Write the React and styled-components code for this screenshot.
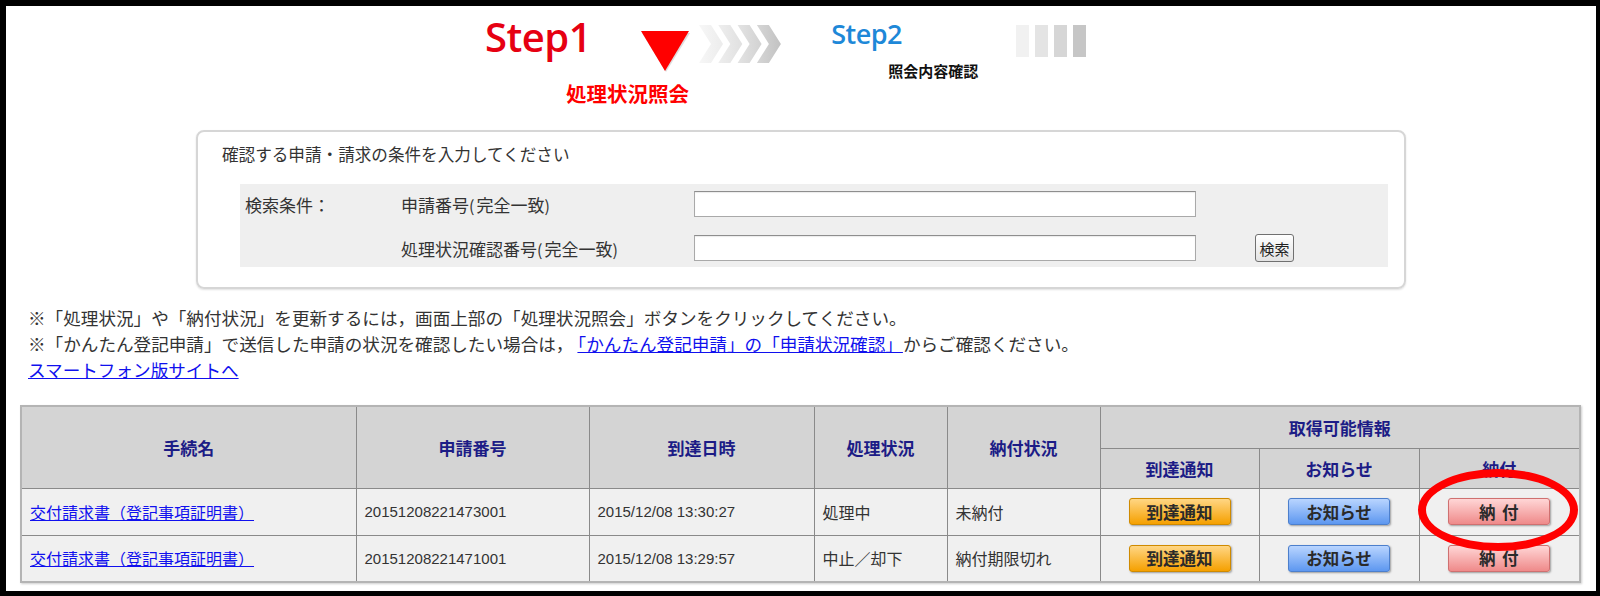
import React from "react";
import styled, { createGlobalStyle } from "styled-components";

//////////////// Global ////////////////
const GlobalStyle = createGlobalStyle`
  html, body {
    margin: 0;
    padding: 0;
    background: #fff;
  }
  body {
    font-family: "Liberation Sans", "Noto Sans CJK JP", sans-serif;
    color: #333;
  }
`;

const JP = `"Liberation Sans", "Noto Sans CJK JP", sans-serif`;

//////////////// Frame ////////////////
const Frame = styled.div`
  position: relative;
  box-sizing: border-box;
  width: 1600px;
  height: 596px;
  border-style: solid;
  border-color: #000;
  border-width: 6px 4px 5px 6px;
  background: #fff;
  overflow: hidden;
`;

//////////////// Step header ////////////////
const StepBar = styled.div`
  display: flex;
  align-items: flex-start;
  height: 124px;
  padding-left: 479px;
  box-sizing: border-box;
`;

const StepColumn = styled.div`
  display: flex;
  flex-direction: column;
  align-items: flex-start;
  margin-left: ${(p) => p.$left || 0}px;
`;

const StepRow = styled.div`
  display: flex;
  align-items: flex-start;
`;

const StepTitle = styled.div`
  font-family: "Open Sans", "Noto Sans", sans-serif;
  font-weight: 600;
  font-size: ${(p) => p.$size}px;
  line-height: ${(p) => p.$size}px;
  margin-top: ${(p) => p.$top}px;
  color: ${(p) => p.$color};
  letter-spacing: -0.5px;
`;

const StepLabel = styled.div`
  font-family: ${JP};
  font-weight: bold;
  font-size: ${(p) => p.$size}px;
  line-height: 1.2;
  color: ${(p) => p.$color};
  margin-left: ${(p) => p.$indent}px;
  margin-top: ${(p) => p.$top}px;
  white-space: nowrap;
`;

const StepGraphic = styled.svg`
  display: block;
  flex: none;
  margin-top: ${(p) => p.$top}px;
  margin-left: ${(p) => p.$left}px;
`;

function Triangle() {
  return (
    <StepGraphic width="50" height="42" $top={25} $left={50} viewBox="0 0 50 42">
      <polygon points="1,2 49,2 25,41" fill="#bbb" opacity="0.5" />
      <polygon points="0,0 48,0 24,40" fill="#ff0000" />
    </StepGraphic>
  );
}

function Chevrons() {
  const shades = [
    ["#f7f7f7", "#ececec"],
    ["#eeeeee", "#e0e0e0"],
    ["#e3e3e3", "#d2d2d2"],
    ["#d6d6d6", "#c2c2c2"],
  ];
  return (
    <StepGraphic width="82" height="38" $top={19} $left={8} viewBox="0 0 82 38">
      <defs>
        {shades.map(([a, b], i) => (
          <linearGradient key={i} id={`chev${i}`} x1="0" x2="1" y1="0" y2="0">
            <stop offset="0" stopColor={a} />
            <stop offset="1" stopColor={b} />
          </linearGradient>
        ))}
      </defs>
      {shades.map((_, i) => {
        const x = i * 19.3;
        return (
          <polygon
            key={i}
            points={`${x},0 ${x + 12},0 ${x + 24},19 ${x + 12},38 ${x},38 ${x + 12},19`}
            fill={`url(#chev${i})`}
          />
        );
      })}
    </StepGraphic>
  );
}

function Bars() {
  const shades = ["#f1f1f1", "#e4e4e4", "#d6d6d6", "#c6c6c6"];
  return (
    <StepGraphic width="72" height="32" $top={19} $left={38} viewBox="0 0 72 32">
      {shades.map((c, i) => (
        <rect key={i} x={i * 19} y="0" width="13" height="32" fill={c} />
      ))}
    </StepGraphic>
  );
}

//////////////// Search box ////////////////
const SearchBox = styled.section`
  box-sizing: border-box;
  width: 1210px;
  margin-left: 190px;
  border: 2px solid #d6d6d6;
  border-radius: 8px;
  box-shadow: 0 1px 2px rgba(0, 0, 0, 0.12);
  padding: 14px 16px 20px 24px;
`;

const SearchTitle = styled.div`
  font-family: ${JP};
  font-size: 16.6px;
  line-height: 20px;
  color: #333;
`;

const SearchGrid = styled.div`
  margin: 18px 0 0 18px;
  background: #efefef;
  padding: 7px 0 6px 5px;
  display: grid;
  grid-template-columns: 156px 293px 502px 1fr;
  grid-auto-rows: 26px;
  row-gap: 18px;
  align-items: center;
`;

const FieldLabel = styled.div`
  font-family: ${JP};
  font-size: 17px;
  color: #333;
  grid-column: ${(p) => p.$col};
  white-space: nowrap;
`;

const Paren = styled.span`
  font-family: "Noto Sans CJK JP", sans-serif;
  font-size: 16px;
  letter-spacing: 2px;
`;

const TextInput = styled.input`
  box-sizing: border-box;
  width: 502px;
  height: 26px;
  border: 1px solid #a9a9a9;
  border-top-color: #8e8e8e;
  background: #fff;
  box-shadow: inset 0 1px 1px rgba(0, 0, 0, 0.08);
  grid-column: 3;
  margin: 0;
`;

const SearchButton = styled.button`
  grid-column: 4;
  justify-self: start;
  margin-left: 59px;
  width: 39px;
  height: 28px;
  padding: 0;
  font-family: ${JP};
  font-size: 15px;
  color: #222;
  background: linear-gradient(#ffffff, #e3e3e3);
  border: 1px solid #707070;
  border-radius: 3px;
`;

//////////////// Notes ////////////////
const Notes = styled.div`
  margin-top: 17px;
  padding-left: 22px;
  font-family: ${JP};
  font-size: 17.6px;
  line-height: 26px;
  color: #333;
`;

const Link = styled.a`
  color: #1010ee;
  text-decoration: underline;
  cursor: pointer;
  margin-left: ${(p) => p.$gap || 0}px;
`;

//////////////// Table ////////////////
const Table = styled.table`
  margin: 21px 0 0 14px;
  width: 1559px;
  border-collapse: collapse;
  table-layout: fixed;
  border: 2px solid #b4b4b4;
  box-shadow: 1px 1px 2px rgba(0, 0, 0, 0.2);
`;

const HeadCell = styled.th`
  background: #d4d4d4;
  border: 1px solid #8a8a8a;
  font-family: ${JP};
  font-weight: bold;
  font-size: 17px;
  color: #1c1c86;
  text-align: center;
  padding: 0;
`;

const HeadRow = styled.tr`
  height: ${(p) => p.$h}px;
`;

const BodyRow = styled.tr`
  height: 47px;
  background: #f0f0f0;
`;

const Cell = styled.td`
  border: 1px solid #8a8a8a;
  padding: 0 0 0 8px;
  font-family: ${JP};
  font-size: ${(p) => (p.$num ? 15 : 16)}px;
  color: #333;
  text-align: ${(p) => (p.$center ? "center" : "left")};
  white-space: nowrap;
`;

const ActionButton = styled.button`
  width: 102px;
  height: 27px;
  padding: 0;
  margin-left: -8px;
  font-family: ${JP};
  font-weight: bold;
  font-size: 16.5px;
  color: #2a2a2a;
  border-radius: 3px;
  border: 1px solid ${(p) => p.$border};
  background: linear-gradient(${(p) => p.$light}, ${(p) => p.$dark});
  box-shadow: 1px 1px 2px rgba(0, 0, 0, 0.35);
  letter-spacing: ${(p) => p.$spacing || 0}px;
`;

const Highlight = styled.div`
  position: absolute;
  left: 1412px;
  top: 463px;
  width: 160px;
  height: 82px;
  box-sizing: border-box;
  border: 8px solid #ff0000;
  border-radius: 50%;
  pointer-events: none;
`;

const BUTTONS = {
  notice: { $light: "#ffd684", $dark: "#f5a000", $border: "#cf8a00" },
  info: { $light: "#b9d5ff", $dark: "#5d97f0", $border: "#4c7fcc" },
  pay: { $light: "#ffd6d6", $dark: "#ef8a8a", $border: "#cf7070" },
};

const rows = [
  {
    id: "20151208221473001",
    date: "2015/12/08 13:30:27",
    status: "処理中",
    payment: "未納付",
  },
  {
    id: "20151208221471001",
    date: "2015/12/08 13:29:57",
    status: "中止／却下",
    payment: "納付期限切れ",
  },
];

const colWidths = [335, 233, 225, 133, 153, 159, 160, 161];

export default function App() {
  return (
    <>
      <GlobalStyle />
      <Frame>
        <StepBar>
          <StepColumn>
            <StepRow>
              <StepTitle $size={40} $top={11} $color="#e60012">
                Step1
              </StepTitle>
              <Triangle />
              <Chevrons />
            </StepRow>
            <StepLabel $size={20.5} $color="#ff0000" $indent={81} $top={10}>
              処理状況照会
            </StepLabel>
          </StepColumn>
          <StepColumn $left={50}>
            <StepTitle $size={27} $top={14} $color="#1e88d8">
              Step2
            </StepTitle>
            <StepLabel $size={15} $color="#111" $indent={57} $top={16}>
              照会内容確認
            </StepLabel>
          </StepColumn>
          <Bars />
        </StepBar>

        <SearchBox>
          <SearchTitle>確認する申請・請求の条件を入力してください</SearchTitle>
          <SearchGrid>
            <FieldLabel $col={1}>検索条件：</FieldLabel>
            <FieldLabel $col={2}>
              申請番号<Paren>(</Paren>完全一致<Paren>)</Paren>
            </FieldLabel>
            <TextInput type="text" />
            <FieldLabel $col={2}>
              処理状況確認番号<Paren>(</Paren>完全一致<Paren>)</Paren>
            </FieldLabel>
            <TextInput type="text" />
            <SearchButton>検索</SearchButton>
          </SearchGrid>
        </SearchBox>

        <Notes>
          <div>
            ※「処理状況」や「納付状況」を更新するには，画面上部の「処理状況照会」ボタンをクリックしてください。
          </div>
          <div>
            ※「かんたん登記申請」で送信した申請の状況を確認したい場合は，
            <Link $gap={4}>「かんたん登記申請」の「申請状況確認」</Link>
            からご確認ください。
          </div>
          <div>
            <Link>スマートフォン版サイトへ</Link>
          </div>
        </Notes>

        <Table>
          <colgroup>
            {colWidths.map((w, i) => (
              <col key={i} style={{ width: w }} />
            ))}
          </colgroup>
          <thead>
            <HeadRow $h={42}>
              <HeadCell rowSpan={2}>手続名</HeadCell>
              <HeadCell rowSpan={2}>申請番号</HeadCell>
              <HeadCell rowSpan={2}>到達日時</HeadCell>
              <HeadCell rowSpan={2}>処理状況</HeadCell>
              <HeadCell rowSpan={2}>納付状況</HeadCell>
              <HeadCell colSpan={3}>取得可能情報</HeadCell>
            </HeadRow>
            <HeadRow $h={40}>
              <HeadCell>到達通知</HeadCell>
              <HeadCell>お知らせ</HeadCell>
              <HeadCell>納付</HeadCell>
            </HeadRow>
          </thead>
          <tbody>
            {rows.map((r) => (
              <BodyRow key={r.id}>
                <Cell>
                  <Link>交付請求書（登記事項証明書）</Link>
                </Cell>
                <Cell $num>{r.id}</Cell>
                <Cell $num>{r.date}</Cell>
                <Cell>{r.status}</Cell>
                <Cell>{r.payment}</Cell>
                <Cell $center>
                  <ActionButton {...BUTTONS.notice}>到達通知</ActionButton>
                </Cell>
                <Cell $center>
                  <ActionButton {...BUTTONS.info}>お知らせ</ActionButton>
                </Cell>
                <Cell $center>
                  <ActionButton {...BUTTONS.pay} $spacing={1}>
                    納 付
                  </ActionButton>
                </Cell>
              </BodyRow>
            ))}
          </tbody>
        </Table>

        <Highlight />
      </Frame>
    </>
  );
}
